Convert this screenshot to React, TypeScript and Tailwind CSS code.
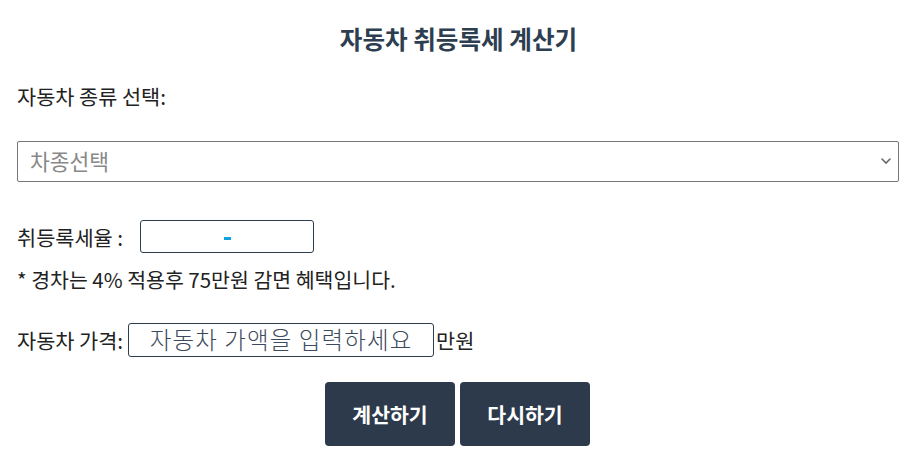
import { useState } from "react";

const font = { fontFamily: '"Noto Sans CJK KR", "Noto Sans", sans-serif' };

export default function App() {
  const [carType, setCarType] = useState("");
  const [price, setPrice] = useState("");

  return (
    <div className="w-[909px] bg-white px-[17px] pt-[20px] text-[#222]" style={font}>
      <h1 className="h-[36px] pl-[8px] text-center text-[24.6px] font-bold leading-[36px] text-[#2c3e50]">
        자동차 취등록세 계산기
      </h1>

      <p className="mt-[26px] h-[28px] text-[20.8px] leading-[28px]">자동차 종류 선택:</p>

      {/* select */}
      <div className="relative mt-[31px] w-[882px]">
        <select
          value={carType}
          onChange={(e) => setCarType(e.target.value)}
          className="h-[41px] w-full appearance-none rounded-[2px] border border-[#767676] bg-white pl-[12px] text-[21.5px] text-[#888]"
        >
          <option value="">차종선택</option>
          <option value="normal">일반 승용차</option>
          <option value="light">경차</option>
        </select>
        <svg
          className="pointer-events-none absolute right-[8px] top-[16px]"
          width="10"
          height="8"
          viewBox="0 0 10 8"
          fill="none"
        >
          <path d="M1 2l4 4 4-4" stroke="#666" strokeWidth="1.6" strokeLinecap="round" />
        </svg>
      </div>

      {/* rate */}
      <div className="mt-[38px] flex h-[33px] items-center">
        <span className="text-[20.8px] leading-[28px]">취등록세율 :</span>
        <div className="ml-[17px] flex h-[33px] w-[174px] items-center justify-center rounded-[3px] border border-[#2c3e50]">
          <span className="mt-[4px] h-[3px] w-[7px] bg-[#0fa3dc]" />
        </div>
      </div>

      <p className="mt-[13px] h-[26px] text-[20.5px] leading-[26px]">
        * 경차는 4% 적용후 75만원 감면 혜택입니다.
      </p>

      {/* price */}
      <div className="mt-[31px] flex h-[34px] items-center">
        <span className="text-[20.8px] leading-[28px]">자동차 가격:</span>
        <input
          value={price}
          onChange={(e) => setPrice(e.target.value)}
          placeholder="자동차 가액을 입력하세요"
          className="ml-[5px] h-[34px] w-[306px] rounded-[3px] border border-[#2c3e50] text-center text-[23.5px] font-light tracking-[1.1px] text-[#2c3e50] outline-none placeholder:text-[#3b4a5c]"
        />
        <span className="ml-[2px] text-[20.8px] leading-[28px]">만원</span>
      </div>

      {/* buttons */}
      <div className="mt-[25px] flex justify-center gap-[5px] pl-[6px]">
        <button className="h-[64px] w-[130px] rounded-[4px] bg-[#2c3a4b] text-[20.5px] font-bold text-white">
          계산하기
        </button>
        <button
          onClick={() => {
            setCarType("");
            setPrice("");
          }}
          className="h-[64px] w-[130px] rounded-[4px] bg-[#2c3a4b] text-[20.5px] font-bold text-white"
        >
          다시하기
        </button>
      </div>
      <div className="h-[24px]" />
    </div>
  );
}
